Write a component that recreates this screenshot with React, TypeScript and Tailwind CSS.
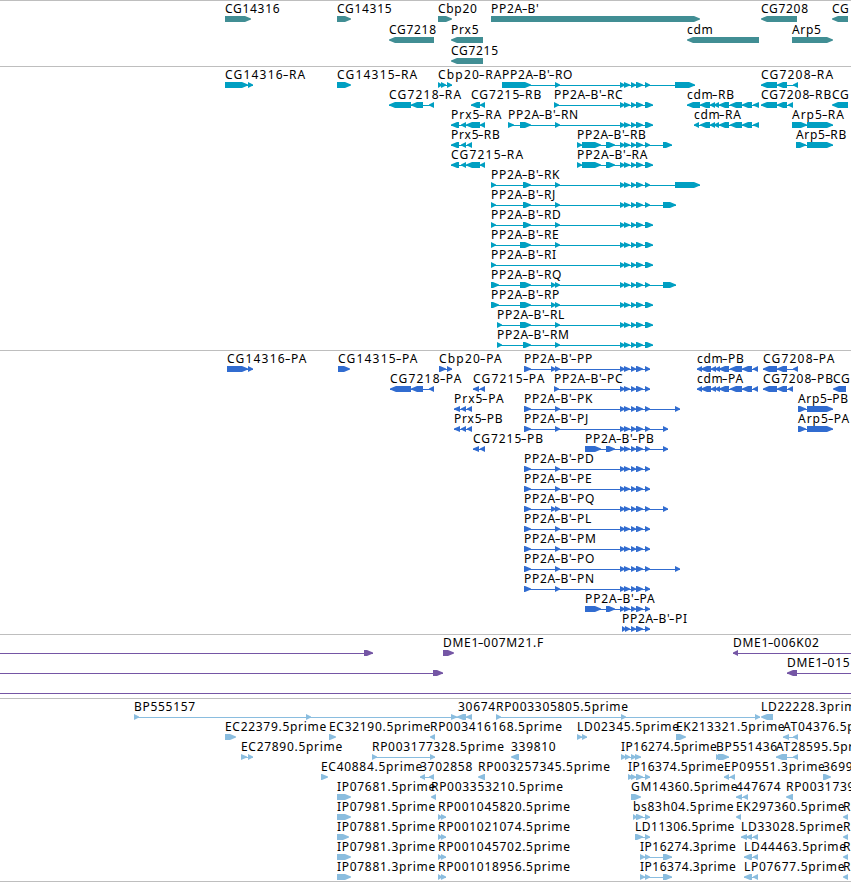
type Seg = [number, number];
type Strand = '+' | '-';
type Feature = { x: number; label?: string; strand: Strand; segs: Seg[] };
type TrackData = { id: string; color: string; rowClass: string; padClass: string; rows: Feature[][] };

const f = (x: number, label: string, strand: Strand, ...segs: Seg[]): Feature => ({ x, label, strand, segs });

// exons shared by most of the PP2A-B' isoforms
const CORE: Seg[] = [[620, 625], [624, 630], [631, 636], [636, 643]];
const CORE_S: Seg[] = [...CORE, [645, 650]];
const CORE_L: Seg[] = [...CORE, [645, 653]];
const CDM: Seg[] = [[719, 729], [730, 742], [742, 752], [753, 759]];

const genes: Feature[][] = [
  [
    f(225, 'CG14316', '+', [225, 251]),
    f(337, 'CG14315', '+', [337, 351]),
    f(438, 'Cbp20', '+', [438, 452]),
    f(491, "PP2A-B'", '+', [491, 700]),
    f(761, 'CG7208', '-', [761, 797]),
    f(832, 'CG', '-', [832, 848]),
  ],
  [
    f(389, 'CG7218', '-', [389, 434]),
    f(451, 'Prx5', '-', [451, 483]),
    f(687, 'cdm', '-', [687, 759]),
    f(792, 'Arp5', '+', [792, 833]),
  ],
  [f(451, 'CG7215', '-', [451, 483])],
];

const transcripts: Feature[][] = [
  [
    f(225, 'CG14316-RA', '+', [225, 248], [248, 253]),
    f(337, 'CG14315-RA', '+', [337, 351]),
    f(438, 'Cbp20-RA', '+', [438, 442], [441, 446], [447, 452]),
    f(502, "PP2A-B'-RO", '+', [502, 531], [555, 560], ...CORE_S, [675, 695]),
    f(761, 'CG7208-RA', '-', [761, 777], [777, 787], [793, 798]),
  ],
  [
    f(389, 'CG7218-RA', '-', [389, 411], [411, 423], [429, 434]),
    f(471, 'CG7215-RB', '-', [471, 480], [480, 485]),
    f(554, "PP2A-B'-RC", '+', [554, 559], ...CORE_L),
    f(687, 'cdm-RB', '-', [687, 700], [700, 710], [710, 715], [714, 719], ...CDM),
    f(761, 'CG7208-RB', '-', [761, 777], [777, 787], [788, 793]),
    f(832, 'CG', '-', [832, 848]),
  ],
  [
    f(451, 'Prx5-RA', '-', [451, 459], [461, 466], [466, 480], [480, 485]),
    f(508, "PP2A-B'-RN", '+', [508, 514], [520, 531], [555, 560], ...CORE_L),
    f(694, 'cdm-RA', '-', [694, 699], [700, 710], [710, 715], [714, 719], ...CDM),
    f(792, 'Arp5-RA', '+', [792, 807], [807, 833]),
  ],
  [
    f(451, 'Prx5-RB', '-', [451, 459], [461, 466], [467, 472]),
    f(577, "PP2A-B'-RB", '+', [577, 582], [582, 601], [606, 615], ...CORE_S, [663, 672]),
    f(796, 'Arp5-RB', '+', [796, 806], [807, 833]),
  ],
  [
    f(451, 'CG7215-RA', '-', [451, 459], [461, 466], [466, 480], [480, 485]),
    f(577, "PP2A-B'-RA", '+', [577, 582], [582, 601], [606, 615], ...CORE_L),
  ],
  [f(491, "PP2A-B'-RK", '+', [491, 496], [523, 531], [555, 560], ...CORE_S, [675, 700])],
  [f(491, "PP2A-B'-RJ", '+', [491, 496], [523, 531], [555, 560], ...CORE_S, [663, 676])],
  [f(491, "PP2A-B'-RD", '+', [491, 496], [523, 531], [555, 560], ...CORE_L)],
  [f(491, "PP2A-B'-RE", '+', [491, 496], [520, 531], [555, 560], ...CORE_L)],
  [f(491, "PP2A-B'-RI", '+', [491, 496], ...CORE_L)],
  [f(491, "PP2A-B'-RQ", '+', [491, 499], [520, 531], [551, 556], [555, 560], ...CORE_S, [663, 676])],
  [f(491, "PP2A-B'-RP", '+', [491, 499], [520, 531], [551, 556], [555, 560], ...CORE_L)],
  [f(497, "PP2A-B'-RL", '+', [497, 502], [520, 531], [555, 560], ...CORE_L)],
  [f(497, "PP2A-B'-RM", '+', [497, 502], [523, 531], [555, 560], ...CORE_L)],
];

const CDM_P: Seg[] = [[697, 702], [701, 711], [711, 716], [715, 720], [719, 729], [730, 742], [742, 752], [753, 758]];

const proteins: Feature[][] = [
  [
    f(227, 'CG14316-PA', '+', [227, 248], [248, 253]),
    f(338, 'CG14315-PA', '+', [338, 350]),
    f(439, 'Cbp20-PA', '+', [439, 446], [447, 452]),
    f(524, "PP2A-B'-PP", '+', [524, 531], [551, 556], [555, 560], ...CORE_S),
    f(697, 'cdm-PB', '-', ...CDM_P),
    f(763, 'CG7208-PA', '-', [763, 777], [777, 787], [793, 798]),
  ],
  [
    f(390, 'CG7218-PA', '-', [390, 411], [411, 423], [429, 434]),
    f(473, 'CG7215-PA', '-', [473, 479], [480, 485]),
    f(554, "PP2A-B'-PC", '+', [554, 559], ...CORE_S),
    f(697, 'cdm-PA', '-', ...CDM_P),
    f(763, 'CG7208-PB', '-', [763, 777], [777, 787], [788, 793]),
    f(833, 'CG', '-', [833, 846]),
  ],
  [
    f(454, 'Prx5-PA', '-', [454, 460], [461, 466], [467, 472]),
    f(524, "PP2A-B'-PK", '+', [524, 531], [555, 560], ...CORE_S, [675, 680]),
    f(798, 'Arp5-PB', '+', [798, 806], [807, 833]),
  ],
  [
    f(454, 'Prx5-PB', '-', [454, 460], [461, 466], [467, 472]),
    f(524, "PP2A-B'-PJ", '+', [524, 531], [555, 560], ...CORE_S, [663, 668]),
    f(798, 'Arp5-PA', '+', [798, 806], [807, 833]),
  ],
  [
    f(473, 'CG7215-PB', '-', [473, 479], [480, 485]),
    f(585, "PP2A-B'-PB", '+', [585, 601], [606, 615], ...CORE_S, [663, 668]),
  ],
  [f(524, "PP2A-B'-PD", '+', [524, 531], [555, 560], ...CORE_S)],
  [f(524, "PP2A-B'-PE", '+', [524, 531], [555, 560], ...CORE_S)],
  [f(524, "PP2A-B'-PQ", '+', [524, 531], [551, 556], [555, 560], ...CORE_S, [663, 668])],
  [f(524, "PP2A-B'-PL", '+', [524, 531], [555, 560], ...CORE_S)],
  [f(524, "PP2A-B'-PM", '+', [524, 531], [555, 560], ...CORE_S)],
  [f(524, "PP2A-B'-PO", '+', [524, 531], [555, 560], ...CORE_S, [675, 680])],
  [f(524, "PP2A-B'-PN", '+', [524, 531], [555, 560], ...CORE_S)],
  [f(585, "PP2A-B'-PA", '+', [585, 601], [606, 615], ...CORE_S)],
  [f(622, "PP2A-B'-PI", '+', [622, 626], [625, 630], [631, 636], [636, 643], [645, 650])],
];

// segments outside 0..851 keep the connector running off the edge
const clones: Feature[][] = [
  [
    f(0, '', '+', [-20, -10], [364, 373]),
    f(443, 'DME1-007M21.F', '+', [443, 454]),
    f(733, 'DME1-006K02', '-', [733, 738], [870, 880]),
  ],
  [
    f(0, '', '+', [-20, -10], [433, 443]),
    f(787, 'DME1-015', '-', [787, 797], [870, 880]),
  ],
  [f(0, '', '+', [-20, -10], [870, 880])],
];

const ests: Feature[][] = [
  [
    f(134, 'BP555157', '+', [134, 139], [306, 311], [451, 457]),
    f(458, '30674', '-', [457, 466], [466, 472]),
    f(496, 'RP003305805.5prime', '+', [496, 501], [621, 626], [755, 760]),
    f(761, 'LD22228.3prime', '-', [761, 773]),
  ],
  [
    f(225, 'EC22379.5prime', '+', [225, 236]),
    f(329, 'EC32190.5prime', '+', [329, 336]),
    f(430, 'RP003416168.5prime', '-', [430, 435]),
    f(577, 'LD02345.5prime', '+', [577, 582], [582, 587]),
    f(676, 'EK213321.5prime', '+', [676, 686]),
    f(783, 'AT04376.5prime', '-', [783, 789], [793, 798]),
  ],
  [
    f(241, 'EC27890.5prime', '+', [241, 247], [248, 253]),
    f(372, 'RP003177328.5prime', '+', [372, 377], [430, 435]),
    f(511, '339810', '-', [511, 519]),
    f(621, 'IP16274.5prime', '+', [621, 626], [625, 630], [631, 636], [635, 641]),
    f(716, 'BP551436', '+', [716, 721], [718, 729]),
    f(776, 'AT28595.5prime', '-', [776, 787], [793, 798]),
  ],
  [
    f(321, 'EC40884.5prime', '+', [321, 328]),
    f(420, '3702858', '-', [420, 425], [429, 434]),
    f(478, 'RP003257345.5prime', '-', [478, 485]),
    f(628, 'IP16374.5prime', '+', [628, 633], [631, 636], [636, 643], [645, 650]),
    f(724, 'EP09551.3prime', '-', [724, 729], [730, 735]),
    f(823, '3699', '+', [823, 831]),
  ],
  [
    f(337, 'IP07681.5prime', '+', [337, 351]),
    f(431, 'RP003353210.5prime', '-', [431, 436]),
    f(631, 'GM14360.5prime', '+', [631, 641]),
    f(736, '447674', '-', [736, 742], [743, 748]),
    f(786, 'RP0031739', '-', [786, 793]),
  ],
  [
    f(337, 'IP07981.5prime', '+', [337, 351]),
    f(438, 'RP001045820.5prime', '+', [438, 442], [441, 446]),
    f(633, 'bs83h04.5prime', '+', [633, 637], [636, 643], [645, 650]),
    f(736, 'EK297360.5prime', '-', [736, 741]),
    f(843, 'R', '-', [843, 848]),
  ],
  [
    f(337, 'IP07881.5prime', '+', [337, 349]),
    f(438, 'RP001021074.5prime', '+', [438, 442], [441, 446]),
    f(635, 'LD11306.5prime', '+', [635, 643], [645, 650]),
    f(741, 'LD33028.5prime', '-', [741, 747], [746, 752], [753, 758]),
    f(843, 'R', '-', [843, 848]),
  ],
  [
    f(337, 'IP07981.3prime', '+', [337, 351]),
    f(438, 'RP001045702.5prime', '+', [438, 442], [441, 446]),
    f(640, 'IP16274.3prime', '+', [640, 645], [645, 650], [663, 672]),
    f(744, 'LD44463.5prime', '-', [744, 752], [753, 758]),
    f(843, 'R', '-', [843, 848]),
  ],
  [
    f(337, 'IP07881.3prime', '+', [337, 351]),
    f(438, 'RP001018956.5prime', '+', [438, 442], [441, 446]),
    f(640, 'IP16374.3prime', '+', [640, 645], [645, 650], [663, 672]),
    f(744, 'LP07677.5prime', '-', [744, 752], [753, 758]),
    f(843, 'R', '-', [843, 848]),
  ],
];

const tracks: TrackData[] = [
  { id: 'gene', color: '#418e94', rowClass: 'h-[21px]', padClass: 'pb-[2px]', rows: genes },
  { id: 'mrna', color: '#009fc2', rowClass: 'h-5', padClass: 'pb-[3px]', rows: transcripts },
  { id: 'cds', color: '#316cd0', rowClass: 'h-5', padClass: 'pb-[3px]', rows: proteins },
  { id: 'bac', color: '#7556a5', rowClass: 'h-5', padClass: 'pb-[3px]', rows: clones },
  { id: 'est', color: '#8abddf', rowClass: 'h-5', padClass: 'pb-[2px]', rows: ests },
];

function points([a, b]: Seg, strand: Strand) {
  const tip = Math.min(6, b - a);
  if (strand === '+') return `${a},0 ${b - tip},0 ${b},2.5 ${b},3.5 ${b - tip},6 ${a},6`;
  return `${b},0 ${a + tip},0 ${a},2.5 ${a},3.5 ${a + tip},6 ${b},6`;
}

function Glyph({ feature }: { feature: Feature }) {
  const { segs, strand } = feature;
  const start = segs[0][0];
  const end = segs[segs.length - 1][1];
  return (
    <g>
      {segs.length > 1 && <rect x={start} y={3} width={end - start} height={1} shapeRendering="crispEdges" />}
      {segs.map((s, i) => <polygon key={i} points={points(s, strand)} />)}
    </g>
  );
}

function tracking(label: string) {
  if (/^(CG|Cbp).*-[RP]A$/.test(label)) return 'tracking-[1.2px]';
  if (/^CG.*-[RP]B$/.test(label)) return 'tracking-[0.95px]';
  if (/^(Prx|Arp).*-[RP]A$/.test(label)) return 'tracking-[1px]';
  if (/^(IP1|LD1)/.test(label)) return 'tracking-[0.5px]';
  if (/^PP2A.*A$/.test(label)) return 'tracking-[0.9px]';
  return 'tracking-[0.7px]';
}

function Label({ x, text }: { x: number; text: string }) {
  return (
    <span className={`absolute top-0 leading-4 whitespace-nowrap ${tracking(text)}`} style={{ left: x }}>
      {text.split(/(-)/).map((part, i) => part === '-'
        ? <span key={i} className="inline-block scale-x-150">-</span>
        : part)}
    </span>
  );
}

function Row({ features, color, rowClass }: { features: Feature[]; color: string; rowClass: string }) {
  return (
    <div className={`relative w-full ${rowClass}`}>
      <svg className="absolute left-0 top-[15px]" width={851} height={6} fill={color}>
        {features.map((ft, i) => <Glyph key={i} feature={ft} />)}
      </svg>
      {features.map((ft, i) => ft.label && <Label key={i} x={ft.x} text={ft.label} />)}
    </div>
  );
}

export default function App() {
  return (
    <div className="w-[851px] h-[882px] overflow-hidden bg-white text-black text-[12px] font-['Noto_Sans',sans-serif]">
      {tracks.map((t) => (
        <section key={t.id} className={`border-t border-[#bebebe] ${t.padClass}`}>
          {t.rows.map((row, i) => <Row key={i} features={row} color={t.color} rowClass={t.rowClass} />)}
        </section>
      ))}
      <div className="border-t border-[#bebebe]" />
    </div>
  );
}
